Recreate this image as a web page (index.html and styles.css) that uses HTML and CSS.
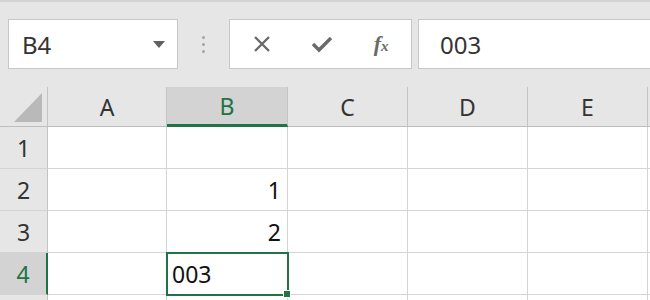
FILE: index.html
```html
<!DOCTYPE html>
<html lang="en">
<head>
  <meta charset="UTF-8" />
  <title>Sheet</title>
  <link rel="stylesheet" href="styles.css">
</head>
<body>
  <div class="toolbar">
    <div class="namebox">
      <span>B4</span>
      <span class="caret"></span>
    </div>
    <div class="grip"><i></i><i></i><i></i></div>
    <div class="fbuttons">
      <span class="fbtn">
        <svg width="20" height="20" viewBox="0 0 20 20"><path d="M3 3 L17 17 M17 3 L3 17" stroke="#6a6a6a" stroke-width="2.4" fill="none"/></svg>
      </span>
      <span class="fbtn">
        <svg width="22" height="20" viewBox="0 0 22 20"><path d="M2 10 L8 16 L20 4" stroke="#6a6a6a" stroke-width="3.4" fill="none"/></svg>
      </span>
      <span class="fbtn fx">f<small>x</small></span>
    </div>
    <div class="formula">003</div>
  </div>

  <div class="sheet">
    <div class="corner"><span class="tri"></span></div>
    <div class="colhead">A</div>
    <div class="colhead active">B</div>
    <div class="colhead">C</div>
    <div class="colhead">D</div>
    <div class="colhead">E</div>
    <div class="colhead"></div>

    <div class="rowhead">1</div>
    <div class="cell"></div><div class="cell"></div><div class="cell"></div><div class="cell"></div><div class="cell"></div><div class="cell"></div>

    <div class="rowhead">2</div>
    <div class="cell"></div><div class="cell num">1</div><div class="cell"></div><div class="cell"></div><div class="cell"></div><div class="cell"></div>

    <div class="rowhead">3</div>
    <div class="cell"></div><div class="cell num">2</div><div class="cell"></div><div class="cell"></div><div class="cell"></div><div class="cell"></div>

    <div class="rowhead active">4</div>
    <div class="cell"></div><div class="cell selected">003</div><div class="cell"></div><div class="cell"></div><div class="cell"></div><div class="cell"></div>

    <div class="rowhead"></div>
    <div class="cell"></div><div class="cell"></div><div class="cell"></div><div class="cell"></div><div class="cell"></div><div class="cell"></div>
  </div>
</body>
</html>
```

FILE: styles.css
```css
body { margin: 0; background: #e6e6e6; font-family: "Noto Sans", "Open Sans", sans-serif; color: #222; overflow: hidden; }

.toolbar { display: flex; align-items: stretch; height: 68px; padding-top: 17px; border-top: 2px solid #d4d4d4; box-sizing: content-box; }
.namebox { width: 170px; height: 50px; margin-left: 8px; box-sizing: border-box; background: #fff; border: 1px solid #c6c6c6; display: flex; align-items: center; justify-content: space-between; padding: 0 12px 0 13px; font-size: 24px; color: #333; }
.caret { width: 0; height: 0; border-left: 6px solid transparent; border-right: 6px solid transparent; border-top: 7px solid #606060; }
.grip { width: 51px; display: flex; flex-direction: column; align-items: center; justify-content: center; gap: 4px; height: 50px; }
.grip i { width: 3px; height: 3px; border-radius: 50%; background: #a4a4a4; }
.fbuttons { width: 183px; height: 50px; box-sizing: border-box; background: #fff; border: 1px solid #c6c6c6; display: flex; align-items: center; padding-left: 2px; }
.fbtn { width: 60px; display: flex; justify-content: center; align-items: center; }
.fx { font-family: "Liberation Serif", serif; font-style: italic; font-weight: bold; font-size: 22px; color: #6a6a6a; align-items: baseline; }
.fx small { font-size: 15px; margin-left: 0; vertical-align: baseline; }
.formula { flex: 1; height: 50px; margin-left: 6px; box-sizing: border-box; background: #fff; border: 1px solid #c6c6c6; border-right: none; padding-left: 21px; display: flex; align-items: center; font-size: 24px; color: #333; }

.sheet { display: grid; grid-template-columns: 48px 119px 121px 120px 120px 120px 1fr; grid-template-rows: 40px 42px 42px 42px 42px 42px; font-size: 23px; }
.corner, .colhead { border-right: 1px solid #c4c4c4; border-bottom: 1px solid #bdbdbd; box-sizing: border-box; display: flex; align-items: center; justify-content: center; color: #333; }
.corner { align-items: flex-end; justify-content: flex-end; padding: 0 5px 4px 0; }
.tri { width: 28px; height: 29px; background: #b9b9b9; clip-path: polygon(100% 0, 100% 100%, 0 100%); }
.colhead.active { background: #d3d3d3; color: #217346; border-bottom: 3px solid #217346; }
.rowhead { border-right: 1px solid #c4c4c4; border-bottom: 1px solid #d4d4d4; box-sizing: border-box; display: flex; align-items: center; justify-content: center; color: #333; }
.rowhead.active { background: #d3d3d3; color: #217346; border-right: 2px solid #217346; }
.cell { background: #fff; border-right: 1px solid #d4d4d4; border-bottom: 1px solid #d4d4d4; box-sizing: border-box; display: flex; align-items: center; padding: 0 5px; color: #111; }
.cell.num { justify-content: flex-end; padding-right: 6px; }
.cell.selected { position: relative; outline: 2px solid #217346; outline-offset: -1px; }
.cell.selected::after { content: ""; position: absolute; right: -4px; bottom: -4px; width: 6px; height: 6px; background: #217346; border: 1px solid #fff; }
```
